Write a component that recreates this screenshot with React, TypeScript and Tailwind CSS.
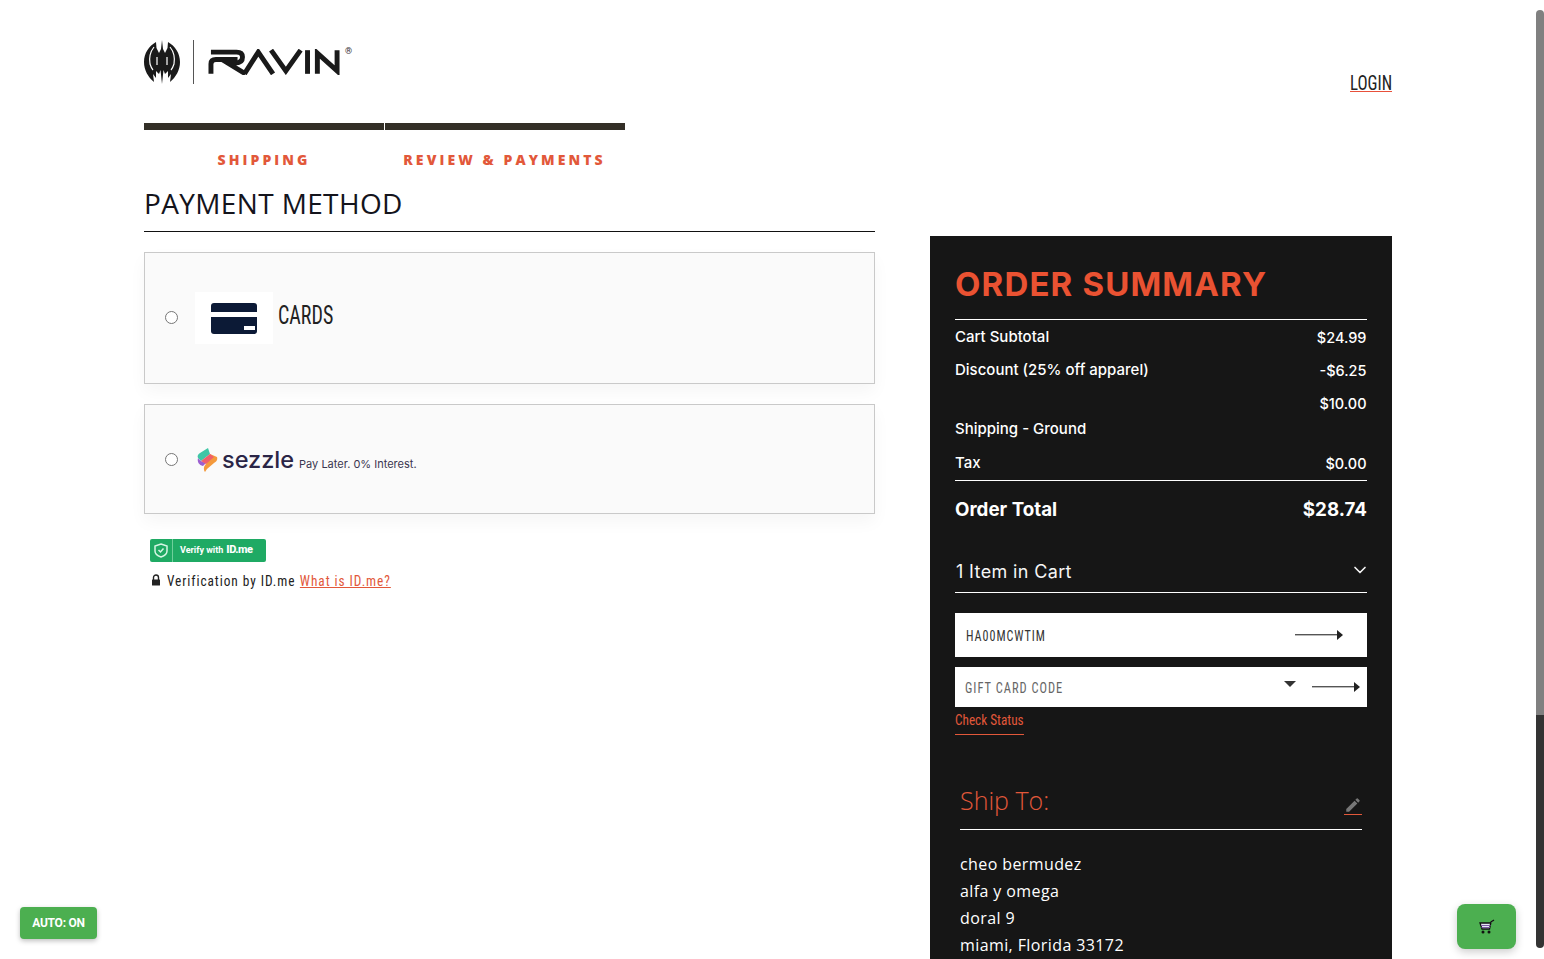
import React from 'react';
import { ChevronDown } from 'lucide-react';
import { MdEdit } from 'react-icons/md';

const RavinLogo = () => (
  <div className="flex items-center h-[44px]">
    <svg width="36" height="44" viewBox="0 0 36 44">
      <path
        fill="#1a1a1a"
        d="M18 0 L19 9 L21 13 L23.5 8 L24 2 C31 6 36 13 36 22 C36 30 32 37 26 42 L27 34 L24 38 L24 31 L21 34 L19.5 30 L18 44 L16.5 30 L15 34 L12 31 L12 38 L9 34 L10 42 C4 37 0 30 0 22 C0 13 5 6 12 2 L12.5 8 L15 13 L17 9 Z"
      />
      <g fill="none" stroke="#fff" strokeWidth="1.2">
        <path d="M10 7 C6 12 5 18 6 24 C7 27 8 29 9 30" />
        <path d="M26 7 C30 12 31 18 30 24 C29 27 28 29 27 30" />
        <path d="M13 17 V25 M23 17 V25" />
      </g>
    </svg>
    <div className="w-px h-[44px] bg-[#555] ml-[13px] mr-[14px]" />
    <svg width="134" height="26" viewBox="0 0 136 26" className="mt-[-1px]">
      <g fill="none" stroke="#1a1a1a" strokeWidth="5">
        <path d="M3 25 V15 Q3 10.5 8 10.5 H30" />
        <path d="M3 3 H29 Q35 3 35 8 Q35 14 28 14 H20 L38 25" />
        <path d="M37 25 L51 3 L66 25" />
        <path d="M64 1 L79 22 L94 1" />
        <path d="M101 1 V25" />
        <path d="M111 25 V4 L131 22 V1" />
      </g>
    </svg>
    <span className="text-[9px] text-[#333] self-start mt-[5px] ml-[3px]">®</span>
  </div>
);

const CardLogo = () => (
  <div className="w-[78px] h-[52px] bg-white flex items-center justify-center">
    <svg width="46" height="31" viewBox="0 0 46 31">
      <rect width="46" height="31" rx="3" fill="#0c1a36" />
      <rect y="9" width="46" height="5" fill="#fff" />
      <rect x="33" y="23" width="11" height="4" fill="#fff" />
    </svg>
  </div>
);

const SezzleMark = () => (
  <svg width="21" height="24" viewBox="0 0 21 24">
    <path fill="#3fc6a6" d="M11 0 L13 6 L4 13 L1 10 C0 8 1 6 3 5 Z" />
    <path fill="#9b5fd0" d="M1 10 C3 13 6 15 10 14 L6 18 C2 17 0 14 1 10 Z" />
    <path fill="#f49a3c" d="M13 6 L20 9 C21 12 19 14 17 15 L10 21 L8 24 C6 21 7 18 9 16 Z" />
    <path fill="#ef5f6b" d="M4 13 L13 6 L17 9 L9 16 Z" />
  </svg>
);

const Radio = () => (
  <div className="w-[13px] h-[13px] rounded-full border border-[#767676] bg-white shrink-0" />
);

const Row = ({ label, value }: { label: string; value: string }) => (
  <div className="flex justify-between items-center h-[33px] text-[15px] font-medium text-white">
    <span>{label}</span>
    <span className="text-[14.5px] mr-[0.5px]">{value}</span>
  </div>
);

const Arrow = ({ width }: { width: number }) => (
  <svg width={width} height="10" viewBox={`0 0 ${width} 10`}>
    <rect x="0" y="4" width={width - 5} height="1.4" fill="#555" />
    <path d={`M${width - 6} 0 L${width} 5 L${width - 6} 10 Z`} fill="#222" />
  </svg>
);

export default function App() {
  return (
    <div className="relative h-[959px] overflow-hidden bg-white font-['Roboto',sans-serif]">
      <div className="w-[1536px] h-full px-[144px] flex flex-col">
        <header className="flex justify-between shrink-0 h-[123px] pt-[40px]">
          <RavinLogo />
          <a className="text-[20px] leading-none mt-[33px] h-[19px] text-[#222] border-b border-[#e8503a] [font-stretch:75%] origin-right scale-x-[0.84]">
            LOGIN
          </a>
        </header>

        <div className="flex justify-between">
          <main className="w-[731px]">
            <div className="flex w-[481px] gap-px">
              <div className="flex-1 h-[7px] bg-[#332f27]" />
              <div className="flex-1 h-[7px] bg-[#332f27]" />
            </div>
            <div className="flex w-[481px] mt-[22px] text-[14px] leading-[16px] font-['Open_Sans',sans-serif] font-extrabold tracking-[0.22em] text-[#e2583a]">
              <div className="w-[240px] text-center">SHIPPING</div>
              <div className="w-[241px] text-center">REVIEW &amp; PAYMENTS</div>
            </div>
            <h1 className="mt-[16px] pb-[9px] text-[28px] leading-[38px] tracking-[0.013em] font-['Open_Sans',sans-serif] text-[#14141c] border-b border-[#111]">
              PAYMENT METHOD
            </h1>

            <div className="mt-[20px] h-[132px] border border-[#c9c9c9] bg-[#fafafa] shadow-[0_8px_16px_rgba(0,0,0,0.04)] flex items-start pt-[39px] pl-[20px]">
              <div className="mt-[19px]"><Radio /></div>
              <div className="ml-[17px]"><CardLogo /></div>
              <span className="ml-[5px] mt-[9px] text-[25px] leading-[30px] text-[#222] [font-stretch:75%] origin-left scale-x-[0.8]">CARDS</span>
            </div>

            <div className="mt-[20px] h-[110px] border border-[#c9c9c9] bg-[#fafafa] shadow-[0_8px_16px_rgba(0,0,0,0.04)] flex items-start pl-[20px] pt-[43px]">
              <div className="mt-[5px]"><Radio /></div>
              <div className="ml-[19px]"><SezzleMark /></div>
              <span className="ml-[4px] mt-[-2px] text-[23.5px] leading-[28px] font-['Inter',sans-serif] font-medium text-[#2a2546]">sezzle</span>
              <span className="ml-[5px] mt-[8px] text-[11px] leading-[16px] font-['Inter',sans-serif] text-[#3a3650]">Pay Later. 0% Interest.</span>
            </div>

            <div className="mt-[25px] ml-[6px] w-[116px] h-[23px] rounded-[2px] bg-[#1faa64] flex items-center text-white">
              <svg width="22" height="23" viewBox="0 0 22 23" className="shrink-0">
                <path d="M11 5 L17 7 V12 C17 15 14 17 11 18 C8 17 5 15 5 12 V7 Z" fill="none" stroke="#d6f5e4" strokeWidth="1.5" />
                <path d="M8.5 11 L10.5 13 L13.5 9.5" fill="none" stroke="#d6f5e4" strokeWidth="1.5" />
              </svg>
              <div className="w-px h-[23px] bg-[#6fcf9b]" />
              <span className="ml-[7px] text-[9px] font-bold">Verify with</span>
              <span className="ml-[3px] text-[11px] font-extrabold tracking-[-0.04em]">ID.me</span>
            </div>
            <div className="mt-[10px] ml-[7px] flex items-center text-[15px] leading-[18px] tracking-[0.07em] text-[#222] [font-stretch:75%]">
              <svg width="10" height="12" viewBox="0 0 10 12" className="mr-[6px] mb-[2px]">
                <path d="M2.5 6 V3.5 a2.5 2.5 0 0 1 5 0 V6" fill="none" stroke="#222" strokeWidth="1.4" />
                <rect x="1" y="5.5" width="8" height="6" rx="0.5" fill="#222" />
              </svg>
              <div className="origin-left scale-x-[0.889]">
                <span>Verification by ID.me</span>
                <a className="ml-[5px] underline text-[#e2583a]">What is ID.me?</a>
              </div>
            </div>
          </main>

          <aside className="w-[462px] h-[900px] mt-[113px] bg-[#161616] px-[25px] pt-[28px]">
            <h2 className="text-[33px] leading-[41px] font-['Inter',sans-serif] font-bold text-[#ea5232] pb-[14px] border-b border-white tracking-[0.035em]">
              ORDER SUMMARY
            </h2>
            <div className="pt-px font-['Inter',sans-serif]">
              <Row label="Cart Subtotal" value="$24.99" />
              <Row label="Discount (25% off apparel)" value="-$6.25" />
              <div className="flex justify-end h-[34px] items-center text-[14.5px] mr-[0.5px] font-medium text-white">$10.00</div>
              <div className="flex items-center h-[16px] text-[15px] font-medium text-white">Shipping - Ground</div>
              <div className="mt-[10px]"><Row label="Tax" value="$0.00" /></div>
              <div className="border-t border-white flex justify-between items-center h-[58px] pt-px text-[18.75px] font-bold text-white">
                <span>Order Total</span>
                <span>$28.74</span>
              </div>
              <div className="flex justify-between items-center h-[55px] pt-[12px] pl-px border-b border-white text-[18px] tracking-[0.02em] text-[#f5f5f5]">
                <span>1 Item in Cart</span>
                <ChevronDown size={20} strokeWidth={2} className="mr-[-3px] mb-[2px]" />
              </div>
            </div>

            <div className="mt-[20px] h-[44px] bg-white flex items-center justify-between pl-[11px] pr-[24px]">
              <span className="mt-[2px] text-[15px] tracking-[0.08em] text-[#333] [font-stretch:75%] origin-left scale-x-[0.806]">HA00MCWTIM</span>
              <Arrow width={48} />
            </div>
            <div className="mt-[10px] h-[40px] bg-white flex items-center pl-[10px] pr-[7px]">
              <span className="mt-[2px] text-[15px] tracking-[0.08em] text-[#666] [font-stretch:75%] origin-left scale-x-[0.83]">GIFT CARD CODE</span>
              <span className="ml-auto mb-[6px] w-0 h-0 border-x-[6px] border-x-transparent border-t-[6px] border-t-[#333]" />
              <span className="ml-[16px]"><Arrow width={48} /></span>
            </div>
            <a className="mt-[4px] block w-fit pb-[5px] text-[14px] leading-[18px] text-[#e2583a] border-b border-[#e2583a] [font-stretch:75%] origin-left scale-x-[0.945]">
              Check Status
            </a>

            <div className="mx-[5px] mt-[47px] flex justify-between h-[48px] border-b border-white">
              <span className="text-[25px] leading-[36px] font-['Open_Sans',sans-serif] font-light text-[#e2583a]">Ship To:</span>
              <div className="mt-[14px] w-[18px] h-[19px] border-b border-[#e2583a] flex justify-center">
                <MdEdit size={18} className="text-[#777]" />
              </div>
            </div>
            <address className="mx-[5px] mt-[21px] not-italic text-[16px] leading-[27px] tracking-[0.025em] font-['Open_Sans',sans-serif] text-white">
              <div>cheo bermudez</div>
              <div>alfa y omega</div>
              <div>doral 9</div>
              <div>miami, Florida 33172</div>
            </address>
          </aside>
        </div>
      </div>

      <button className="absolute left-[20px] top-[907px] w-[77px] h-[32px] rounded-[4px] bg-[#4caf50] text-white text-[12px] font-bold tracking-[-0.02em] shadow-[0_2px_5px_rgba(0,0,0,0.25)]">
        AUTO: ON
      </button>
      <button className="absolute left-[1457px] top-[904px] w-[59px] h-[45px] rounded-[8px] bg-[#4caf50] flex items-center justify-center shadow-[0_3px_8px_rgba(0,0,0,0.2)]">
        <svg width="17" height="16" viewBox="0 0 17 16">
          <path d="M16 1 L13 3 L11.5 10 H4 L2 4 H13" fill="#e6e6f5" stroke="#111" strokeWidth="1.3" />
          <path d="M3 6.5 H12.5 M3.5 8.5 H12" stroke="#7a5aa0" strokeWidth="1" />
          <circle cx="5" cy="13" r="1.5" fill="#111" />
          <circle cx="11" cy="13" r="1.5" fill="#111" />
        </svg>
      </button>

      <div className="absolute right-0 top-0 h-full w-[8px] bg-white">
        <div className="absolute left-0 top-[10px] w-[8px] h-[705px] rounded-t-[4px] bg-[#808080]" />
        <div className="absolute left-0 top-[715px] w-[8px] h-[233px] rounded-b-[4px] bg-[#333]" />
      </div>
    </div>
  );
}
